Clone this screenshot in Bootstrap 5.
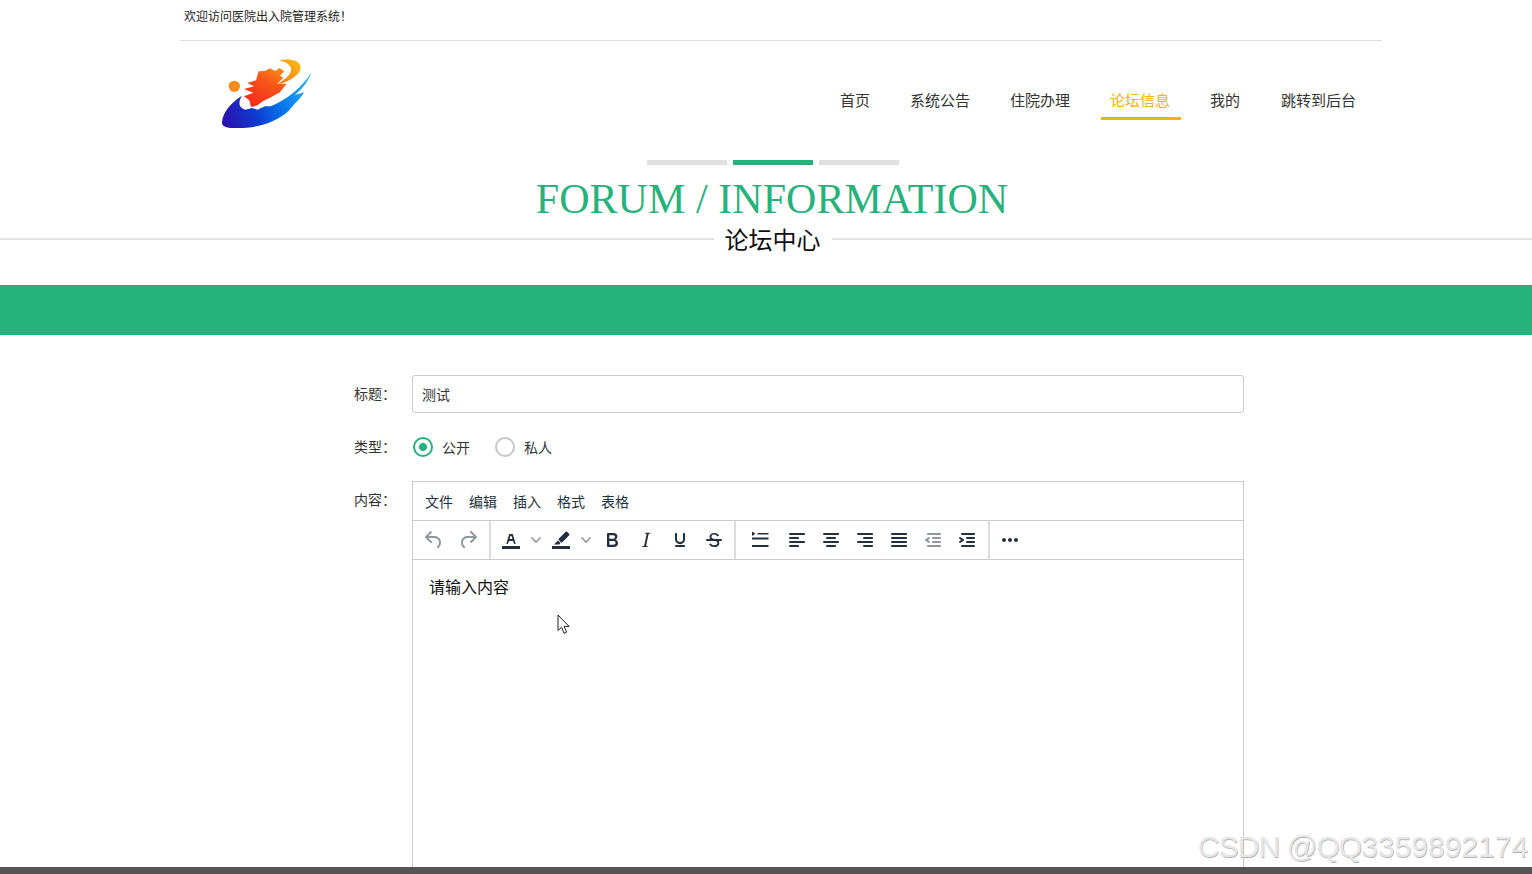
<!doctype html>
<html lang="zh">
<head>
<meta charset="utf-8">
<title>论坛信息</title>
<link href="https://cdn.jsdelivr.net/npm/bootstrap@5.3.0/dist/css/bootstrap.min.css" rel="stylesheet">
<style>
:root{--brand:#26b27c;--cjk:"Liberation Sans","Noto Sans CJK SC",sans-serif}
html,body{height:874px;overflow:hidden}
body{font-family:var(--cjk);color:#333;position:relative;background:#fff}
.page-shell{height:874px}
.page-main{min-height:0;overflow:hidden}
.top-strip{width:1202px;margin-left:180px;height:41px;border-bottom:1px solid #ddd;font-size:12px;line-height:35px;padding-left:4px;color:#222}
.head-row{width:1202px;margin-left:180px;height:119px;position:relative}
.logo-mark{width:95px;height:73.3px;margin:16px 0 0 40px;display:block}
.site-nav{margin:41px 16px 0 0;gap:20px}
.site-nav a{display:block;height:38px;padding:0 10px;font-size:15px;line-height:37px;color:#333;text-decoration:none;border-bottom:3px solid transparent}
.site-nav a:not(:last-child){padding:0 11px 0 9px}
.site-nav a.on{color:#f5b310;border-bottom-color:#f5b310}
.title-wrap{height:125px;padding-left:14px}
.dash-row{gap:6px;height:5px}
.dash-row i{display:block;width:80px;height:5px;background:#e0e0e0}
.dash-row i.on{background:var(--brand)}
.title-en{font-family:"Liberation Serif",serif;font-size:42px;line-height:50px;margin:9px 0 0 -2px;color:var(--brand);font-weight:400;text-align:center;white-space:nowrap;letter-spacing:.06px}
.title-sub{margin-left:-14px;height:34px}
.title-sub b{font-weight:400;font-size:24px;line-height:34px;color:#111;padding:0 11px}
.title-sub span{display:block;height:2px;background:#e2e2e2;margin-top:-5px}
.title-sub .l{flex:1 1 13px}.title-sub .r{flex:1 1 0}
.green-band{height:50px;background:var(--brand)}
.form-area{padding:40px 0 0 312px}
.f-row{margin-bottom:15px}
.f-label{width:100px;padding-right:16px;text-align:right;font-size:14px;line-height:38px;color:#333;margin:0;flex:none}
.f-input{width:832px;height:38px;border:1px solid #ccc;border-radius:3px;font-size:14px;padding:0 9px;color:#333}
.radio-set{height:38px;width:832px;font-size:14px;color:#333;padding-left:1px}
.radio-dot{width:20px;height:20px;border:2px solid #c6c9cc;border-radius:50%;flex:none;margin-right:9px}
.radio-dot.on{border-color:var(--brand);background:radial-gradient(circle,var(--brand) 0 3.6px,#fff 4.4px)}
.opt{margin-right:25px}
.opt em{font-style:normal;margin-top:2px}
.ed-box{width:832px;height:600px;border:1px solid #ccc;flex:none}
.ed-menu{height:38px;padding-left:12px;gap:16px;font-size:14px;line-height:40px;color:#222f3e}
.ed-tools{height:40px;border-top:1px solid #ccc;border-bottom:1px solid #ccc;color:#222f3e}
.tool-grp{height:38px;padding:0 4px;border-right:2px solid #ddd}
.tool-grp.tight{padding:0 3px}
.tool-grp:last-child{border-right:0;padding-left:3px}
.t-b{width:34px;height:38px;flex:none}
.t-b svg{width:24px;height:24px;fill:#222f3e}
.t-b.dim svg{fill:rgba(34,47,62,.5)}
.t-c{width:16px;height:38px;flex:none}
.t-c svg{width:10px;height:10px;fill:rgba(34,47,62,.5)}
.t-w{width:39px}
.gap-1px{margin-left:1px}
.ed-body{padding:16px;font-size:16px;line-height:24px;color:#111}
.foot-bar{height:7px;background:#555;flex:none}
.wm{position:absolute;left:1198px;top:827px;font-family:"Liberation Sans",sans-serif;font-size:30px;line-height:40px;color:#e6e6e6;text-shadow:.6px .6px .6px #b5b5b5;white-space:nowrap}
.wm span{letter-spacing:-.9px}
.cursor-mark{position:absolute;left:557px;top:614px;width:14px;height:21px}
</style>
</head>
<body>
<div class="page-shell d-flex flex-column">
  <div class="page-main flex-grow-1">
    <div class="top-strip">欢迎访问医院出入院管理系统！</div>
    <div class="head-row d-flex justify-content-between align-items-start">
      <svg class="logo-mark" viewBox="150 170 285 220" aria-label="logo">
        <defs>
          <linearGradient id="gb" x1="0" x2="1" y1="0.6" y2="0.4"><stop offset="0" stop-color="#2a14b0"/><stop offset=".35" stop-color="#0b3fd0"/><stop offset=".7" stop-color="#0a7ff0"/><stop offset="1" stop-color="#2ab0f8"/></linearGradient>
          <linearGradient id="gr" x1="0.2" x2="0.8" y1="1" y2="0"><stop offset="0" stop-color="#f52a1c"/><stop offset=".6" stop-color="#f8521a"/><stop offset="1" stop-color="#fb8a14"/></linearGradient>
          <linearGradient id="gy" x1="0" x2="1" y1="1" y2="0"><stop offset="0" stop-color="#f8701a"/><stop offset="1" stop-color="#ffc20e"/></linearGradient>
        </defs>
        <circle cx="193" cy="258" r="17" fill="#f98a1c"/>
        <path fill="url(#gb)" d="M156 365C158 335 185 305 216 286C204 305 205 322 226 328L246 323L262 328L285 318L302 318C348 300 396 262 425 215C412 250 394 268 374 284L403 276C390 298 372 310 358 330C315 372 245 386 190 383C168 383 154 378 156 365Z"/>
        <path fill="url(#gr)" d="M232 248L258 240L266 213L285 212L300 204L316 212L328 203L343 213L330 226L340 232L322 250L350 250L330 276L300 292L280 302L262 315L243 320L238 300L222 288L250 277L222 266L252 258Z"/>
        <path fill="url(#gy)" d="M326 180C368 172 398 184 391 208C385 228 352 246 322 252C348 236 370 216 362 200C356 190 345 184 326 180Z"/>
      </svg>
      <nav class="site-nav d-flex">
        <a href="#">首页</a><a href="#">系统公告</a><a href="#">住院办理</a><a href="#" class="on">论坛信息</a><a href="#">我的</a><a href="#">跳转到后台</a>
      </nav>
    </div>
    <div class="title-wrap">
      <div class="dash-row d-flex justify-content-center"><i></i><i class="on"></i><i></i></div>
      <h1 class="title-en">FORUM / INFORMATION</h1>
      <div class="title-sub d-flex align-items-center"><span class="l"></span><b>论坛中心</b><span class="r"></span></div>
    </div>
    <div class="green-band"></div>
    <form class="form-area">
      <div class="f-row d-flex">
        <label class="f-label">标题：</label>
        <input class="form-control f-input" value="测试">
      </div>
      <div class="f-row d-flex">
        <label class="f-label">类型：</label>
        <div class="radio-set d-flex align-items-center">
          <div class="opt d-flex align-items-center"><span class="radio-dot on"></span><em>公开</em></div>
          <div class="opt d-flex align-items-center"><span class="radio-dot"></span><em>私人</em></div>
        </div>
      </div>
      <div class="d-flex">
        <label class="f-label">内容：</label>
        <div class="ed-box">
          <div class="ed-menu d-flex"><span>文件</span><span>编辑</span><span>插入</span><span>格式</span><span>表格</span></div>
          <div class="ed-tools d-flex">
            <div class="tool-grp d-flex">
              <span class="t-b dim d-flex align-items-center justify-content-center"><svg viewBox="0 0 24 24"><path d="M6.4 8H12c3.7 0 6.2 2 6.8 5.1.6 2.7-.4 5.6-2.3 6.8a1 1 0 0 1-1-1.8c1.1-.6 1.8-2.7 1.4-4.6-.5-2.1-2.1-3.5-4.9-3.5H6.4l3.3 3.3a1 1 0 1 1-1.4 1.4l-5-5a1 1 0 0 1 0-1.4l5-5a1 1 0 0 1 1.4 1.4L6.4 8z"/></svg></span>
              <span class="t-b dim d-flex align-items-center justify-content-center"><svg viewBox="0 0 24 24"><path d="M17.6 10H12c-2.8 0-4.4 1.4-4.9 3.5-.4 2 .3 4 1.4 4.6a1 1 0 1 1-1 1.8c-2-1.2-2.9-4.1-2.3-6.8.6-3 3-5.1 6.8-5.1h5.6l-3.3-3.3a1 1 0 1 1 1.4-1.4l5 5a1 1 0 0 1 0 1.4l-5 5a1 1 0 0 1-1.4-1.4l3.3-3.3z"/></svg></span>
            </div>
            <div class="tool-grp tight d-flex">
              <span class="t-b d-flex align-items-center justify-content-center"><svg viewBox="0 0 24 24"><path d="M3 18h18v3H3z"/><path d="M8.7 16h-.8a.5.5 0 0 1-.5-.6l2.7-9c.1-.3.3-.4.5-.4h2.8c.2 0 .4.1.5.4l2.7 9a.5.5 0 0 1-.5.6h-.8a.5.5 0 0 1-.4-.4l-.7-2.2c0-.3-.3-.4-.5-.4h-3.4c-.2 0-.4.1-.5.4l-.7 2.2c0 .3-.2.4-.4.4zm2.6-7.6l-.6 2a.5.5 0 0 0 .5.6h1.6a.5.5 0 0 0 .5-.6l-.6-2c0-.3-.3-.4-.5-.4h-.4c-.2 0-.4.1-.5.4z"/></svg></span>
              <span class="t-c d-flex align-items-center justify-content-center"><svg viewBox="0 0 10 10"><path d="M8.7 2.2c.3-.3.8-.3 1 0 .4.2.4.7 0 1L5.5 7.8c-.2.3-.7.3-1 0L.3 3.2c-.3-.3-.3-.8 0-1 .3-.3.8-.3 1.1 0L5 6l3.7-3.8z"/></svg></span>
              <span class="t-b d-flex align-items-center justify-content-center"><svg viewBox="0 0 24 24"><path d="M3 18h18v3H3z"/><path d="M18.1 3.8l2.1 2.1c.4.4.4 1 0 1.4l-6.9 6.9c-.4.4-1 .4-1.4 0l-2.1-2.1c-.4-.4-.4-1 0-1.4l6.9-6.9c.4-.4 1-.4 1.4 0zM8.9 12.4l2.7 2.7-1.4 1.4H5z"/></svg></span>
              <span class="t-c d-flex align-items-center justify-content-center"><svg viewBox="0 0 10 10"><path d="M8.7 2.2c.3-.3.8-.3 1 0 .4.2.4.7 0 1L5.5 7.8c-.2.3-.7.3-1 0L.3 3.2c-.3-.3-.3-.8 0-1 .3-.3.8-.3 1.1 0L5 6l3.7-3.8z"/></svg></span>
              <span class="t-b gap-1px d-flex align-items-center justify-content-center"><svg viewBox="0 0 24 24"><path d="M7.8 19c-.3 0-.5 0-.6-.2l-.2-.5V5.7c0-.2 0-.4.2-.5l.6-.2h5c1.5 0 2.7.3 3.5 1 .7.6 1.1 1.4 1.1 2.5a3 3 0 0 1-.6 1.9c-.4.6-1 1-1.6 1.2.4.1.9.3 1.3.6s.8.7 1 1.2c.4.4.5 1 .5 1.6 0 1.3-.4 2.3-1.3 3-.8.7-2.1 1-3.8 1H7.8zm5-8.3c.6 0 1.2-.1 1.6-.5.4-.3.6-.7.6-1.3 0-1.1-.8-1.7-2.3-1.7H9.3v3.5h3.4zm.5 6c.7 0 1.3-.1 1.7-.4.4-.4.6-.9.6-1.5s-.2-1-.7-1.4c-.4-.3-1-.4-2-.4H9.4v3.8h4z"/></svg></span>
              <span class="t-b d-flex align-items-center justify-content-center"><svg viewBox="0 0 24 24"><path d="M16.7 4.7l-.1.9h-.3c-.6 0-1 0-1.4.3-.3.3-.4.6-.5 1.1l-2.1 9.8v.6c0 .5.4.8 1.4.8h.2l-.2.8H8l.2-.8h.2c1.1 0 1.8-.5 2-1.5l2-9.8.1-.5c0-.6-.4-.8-1.4-.8h-.3l.2-.9h5.8z"/></svg></span>
              <span class="t-b d-flex align-items-center justify-content-center"><svg viewBox="0 0 24 24"><path d="M16 5c.6 0 1 .4 1 1v5.5a4 4 0 0 1-.4 1.8l-1 1.4a5.3 5.3 0 0 1-5.5 1 5 5 0 0 1-1.6-1c-.5-.4-.8-.9-1.1-1.4a4 4 0 0 1-.4-1.8V6c0-.6.4-1 1-1s1 .4 1 1v5.5c0 .3 0 .6.2 1l.6.7a3.3 3.3 0 0 0 2.2.8 3.4 3.4 0 0 0 2.2-.8c.3-.2.4-.5.6-.8l.2-.9V6c0-.6.4-1 1-1zM8 17h8c.6 0 1 .4 1 1s-.4 1-1 1H8a1 1 0 0 1 0-2z"/></svg></span>
              <span class="t-b d-flex align-items-center justify-content-center"><svg viewBox="0 0 24 24"><path d="M15.6 8.5c-.5-.7-1-1.1-1.3-1.3-.6-.4-1.3-.6-2-.6-2.7 0-2.8 1.7-2.8 2.1 0 1.6 1.8 2 3.2 2.3 4.4.9 4.6 2.8 4.6 3.9 0 1.4-.7 4.1-5 4.1A6.2 6.2 0 0 1 7 16.4l1.5-1.1c.4.6 1.6 2 3.7 2 1.6 0 2.5-.4 3-1.2.4-.8.3-2-.8-2.6-.7-.4-1.6-.7-2.9-1-1-.2-3.9-.8-3.9-3.6C7.6 6 10.3 5 12.4 5c2.9 0 4.2 1.6 4.7 2.4l-1.5 1.1z"/><path d="M5 11h14a1 1 0 0 1 0 2H5a1 1 0 0 1 0-2z"/></svg></span>
            </div>
            <div class="tool-grp d-flex">
              <span class="t-b t-w d-flex align-items-center justify-content-center"><svg viewBox="0 0 24 24"><path d="M4 3.5l3.5 2.2L4 7.9zM9.5 5h11v1.4h-11zM4 9.5h16.5v2H4zM4 17h16.5v2H4z"/></svg></span>
              <span class="t-b gap-1px d-flex align-items-center justify-content-center"><svg viewBox="0 0 24 24"><path d="M5 5h14c.6 0 1 .4 1 1s-.4 1-1 1H5a1 1 0 1 1 0-2zm0 4h8c.6 0 1 .4 1 1s-.4 1-1 1H5a1 1 0 1 1 0-2zm0 8h8c.6 0 1 .4 1 1s-.4 1-1 1H5a1 1 0 0 1 0-2zm0-4h14c.6 0 1 .4 1 1s-.4 1-1 1H5a1 1 0 0 1 0-2z"/></svg></span>
              <span class="t-b d-flex align-items-center justify-content-center"><svg viewBox="0 0 24 24"><path d="M5 5h14c.6 0 1 .4 1 1s-.4 1-1 1H5a1 1 0 1 1 0-2zm3 4h8c.6 0 1 .4 1 1s-.4 1-1 1H8a1 1 0 1 1 0-2zm0 8h8c.6 0 1 .4 1 1s-.4 1-1 1H8a1 1 0 0 1 0-2zm-3-4h14c.6 0 1 .4 1 1s-.4 1-1 1H5a1 1 0 0 1 0-2z"/></svg></span>
              <span class="t-b d-flex align-items-center justify-content-center"><svg viewBox="0 0 24 24"><path d="M5 5h14c.6 0 1 .4 1 1s-.4 1-1 1H5a1 1 0 1 1 0-2zm6 4h8c.6 0 1 .4 1 1s-.4 1-1 1h-8a1 1 0 0 1 0-2zm0 8h8c.6 0 1 .4 1 1s-.4 1-1 1h-8a1 1 0 0 1 0-2zm-6-4h14c.6 0 1 .4 1 1s-.4 1-1 1H5a1 1 0 0 1 0-2z"/></svg></span>
              <span class="t-b d-flex align-items-center justify-content-center"><svg viewBox="0 0 24 24"><path d="M5 5h14c.6 0 1 .4 1 1s-.4 1-1 1H5a1 1 0 1 1 0-2zm0 4h14c.6 0 1 .4 1 1s-.4 1-1 1H5a1 1 0 1 1 0-2zm0 4h14c.6 0 1 .4 1 1s-.4 1-1 1H5a1 1 0 0 1 0-2zm0 4h14c.6 0 1 .4 1 1s-.4 1-1 1H5a1 1 0 0 1 0-2z"/></svg></span>
              <span class="t-b dim d-flex align-items-center justify-content-center"><svg viewBox="0 0 24 24"><path d="M7 5h12c.6 0 1 .4 1 1s-.4 1-1 1H7a1 1 0 1 1 0-2zm5 4h7c.6 0 1 .4 1 1s-.4 1-1 1h-7a1 1 0 0 1 0-2zm0 4h7c.6 0 1 .4 1 1s-.4 1-1 1h-7a1 1 0 0 1 0-2zm-5 4h12a1 1 0 0 1 0 2H7a1 1 0 0 1 0-2zm1.6-3.8a1 1 0 0 1-1.2 1.6l-3-2a1 1 0 0 1 0-1.6l3-2a1 1 0 0 1 1.2 1.6L6.8 12l1.8 1.2z"/></svg></span>
              <span class="t-b d-flex align-items-center justify-content-center"><svg viewBox="0 0 24 24"><path d="M7 5h12c.6 0 1 .4 1 1s-.4 1-1 1H7a1 1 0 1 1 0-2zm5 4h7c.6 0 1 .4 1 1s-.4 1-1 1h-7a1 1 0 0 1 0-2zm0 4h7c.6 0 1 .4 1 1s-.4 1-1 1h-7a1 1 0 0 1 0-2zm-5 4h12a1 1 0 0 1 0 2H7a1 1 0 0 1 0-2zm-2.6-3.8L6.2 12l-1.8-1.2a1 1 0 0 1 1.2-1.6l3 2a1 1 0 0 1 0 1.6l-3 2a1 1 0 1 1-1.2-1.6z"/></svg></span>
            </div>
            <div class="tool-grp d-flex">
              <span class="t-b d-flex align-items-center justify-content-center"><svg viewBox="0 0 24 24"><path d="M6 10a2 2 0 0 0-2 2c0 1.1.9 2 2 2a2 2 0 0 0 2-2 2 2 0 0 0-2-2zm12 0a2 2 0 0 0-2 2c0 1.1.9 2 2 2a2 2 0 0 0 2-2 2 2 0 0 0-2-2zm-6 0a2 2 0 0 0-2 2c0 1.1.9 2 2 2a2 2 0 0 0 2-2 2 2 0 0 0-2-2z"/></svg></span>
            </div>
          </div>
          <div class="ed-body">请输入内容</div>
        </div>
      </div>
    </form>
  </div>
  <div class="foot-bar"></div>
</div>
<svg class="cursor-mark" viewBox="0 0 14 21"><path d="M1 1v15.5l3.6-3.2 2.4 6 2.6-1.1-2.5-5.8h5z" fill="#fff" stroke="#222" stroke-width="1"/></svg>
<div class="wm"><span>CSDN @QQ</span>3359892174</div>
</body>
</html>
